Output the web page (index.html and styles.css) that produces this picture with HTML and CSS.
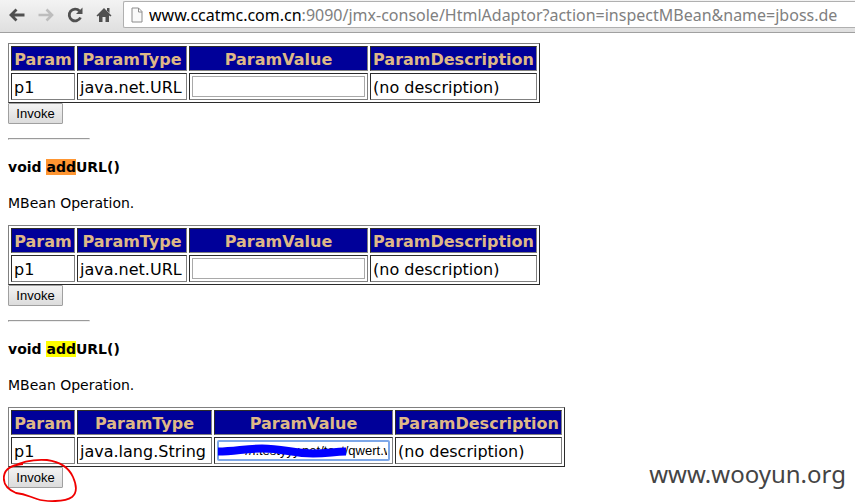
FILE: index.html
```
<!DOCTYPE html>
<html lang="en">
<head>
<meta charset="utf-8">
<title>MBean Inspector</title>
<link rel="stylesheet" href="styles.css">
</head>
<body>
<header class="toolbar">
  <nav class="nav">
    <button class="tool" aria-label="Back"><svg viewBox="0 0 18 18"><path d="M16.500 9H3M8.500 3.500L3 9l5.500 5.500" fill="none" stroke="#505050" stroke-width="2.800"/></svg></button>
    <button class="tool" aria-label="Forward"><svg viewBox="0 0 18 18"><path d="M1.500 9H15M9.500 3.500L15 9l-5.500 5.500" fill="none" stroke="#bdbdbd" stroke-width="2.600"/></svg></button>
    <button class="tool" aria-label="Reload"><svg viewBox="0 0 18 18"><path d="M13.500 5A5.900 5.900 0 1 0 14.500 11.500" fill="none" stroke="#505050" stroke-width="2.800"/><path d="M16.500 1.500V8H10z" fill="#505050"/></svg></button>
    <button class="tool" aria-label="Home"><svg viewBox="0 0 18 18"><path d="M9 2l7.500 7.500-1 1-1.500-1V16h-3.500v-5h-3v5H4V9.500l-1.500 1-1-1z" fill="#505050"/><path d="M12 2h2.500v5L12 4.500z" fill="#505050"/></svg></button>
  </nav>
  <div class="omnibox">
    <svg class="page-icon" viewBox="0 0 12 16"><path d="M1 1h6.500L11 4.500V15H1zM7.500 1v4H11" fill="#fafafa" stroke="#8c8c8c"/></svg>
    <div class="address" role="textbox" aria-label="Address" contenteditable="true" spellcheck="false"><span class="host">www.ccatmc.com.cn</span>:9090/jmx-console/HtmlAdaptor?action=inspectMBean&amp;name=jboss.de</div>
  </div>
</header>
<main>
  <form class="operation">
    <table>
      <colgroup><col class="c-param"><col class="c-url"><col class="c-value"><col class="c-desc"></colgroup>
      <tr><th>Param</th><th>ParamType</th><th>ParamValue</th><th>ParamDescription</th></tr>
      <tr><td>p1</td><td>java.net.URL</td><td class="field"><input type="text" aria-label="p1 value"></td><td>(no description)</td></tr>
    </table>
    <button class="invoke" type="button">Invoke</button>
  </form>
  <hr>
  <h4>void <mark class="current">add</mark>URL()</h4>
  <p>MBean Operation.</p>
  <form class="operation">
    <table>
      <colgroup><col class="c-param"><col class="c-url"><col class="c-value"><col class="c-desc"></colgroup>
      <tr><th>Param</th><th>ParamType</th><th>ParamValue</th><th>ParamDescription</th></tr>
      <tr><td>p1</td><td>java.net.URL</td><td class="field"><input type="text" aria-label="p1 value"></td><td>(no description)</td></tr>
    </table>
    <button class="invoke" type="button">Invoke</button>
  </form>
  <hr>
  <h4>void <mark>add</mark>URL()</h4>
  <p>MBean Operation.</p>
  <form class="operation">
    <table>
      <colgroup><col class="c-param"><col class="c-string"><col class="c-value"><col class="c-desc"></colgroup>
      <tr><th>Param</th><th>ParamType</th><th>ParamValue</th><th>ParamDescription</th></tr>
      <tr><td>p1</td><td>java.lang.String</td><td class="field"><input class="active" type="text" aria-label="p1 value" value="       //i.testyyy.net/test/qwert.war"><svg class="scribble" viewBox="0 0 130 14"><path d="M1 7.500C18 7.500 28 4.500 45 4.500C66 4.500 76 9.500 96 9.500C112 9.500 116 7.500 129 7.500" fill="none" stroke="#00f" stroke-width="8"/></svg></td><td>(no description)</td></tr>
    </table>
    <div class="circled">
      <button class="invoke" type="button">Invoke</button>
      <svg class="ring" viewBox="0 0 76 46"><path d="M8 9C20 3 31 1 44 2C58 4 66 10 70 19C74 28 74 35 69 39C62 44 43 44 34 41C25 38 22 36 13 35C3 31 0 25 1 18C2 11 8 7 20 6" fill="none" stroke="#f00000" stroke-width="1.800"/></svg>
    </div>
  </form>
</main>
<div class="watermark">www.wooyun.org</div>
</body>
</html>
```
FILE: styles.css
```
body {
  margin: 0;
  min-height: 100vh;
  overflow: hidden;
  position: relative;
  background: #fff;
  color: #000;
  font-family: "DejaVu Sans", Verdana, sans-serif;
  font-size: 14px;
}
.toolbar {
  display: flex;
  box-sizing: border-box;
  height: 33px;
  padding: 1px 0 4px 8px;
  gap: 10px;
  background: linear-gradient(#f3f3f3, #dfdfdf);
  border-bottom: 1px solid #a0a0a0;
}
.nav { display: flex; gap: 11px; align-items: center; }
.tool {
  width: 18px;
  height: 18px;
  padding: 0;
  border: 0;
  background: none;
}
.tool svg { display: block; width: 18px; height: 18px; }
.omnibox {
  display: flex;
  align-items: center;
  flex: 1;
  min-width: 0;
  gap: 6px;
  padding-left: 7px;
  border: 1px solid #b0b0b0;
  border-right: 0;
  border-radius: 2px 0 0 2px;
  background: #fff;
}
.page-icon { width: 12px; height: 16px; flex: none; }
.address {
  flex: 1;
  overflow: hidden;
  white-space: nowrap;
  outline: 0;
  color: #808080;
  font: 16px/24px "Noto Sans", sans-serif;
}
.host { color: #000; }
main { padding: 10px 8px 0; }
.operation { margin: 0; }
table {
  table-layout: fixed;
  width: 1px;
  border: 1px solid;
  border-color: #808080 #2b2b2b #2b2b2b #808080;
  border-spacing: 2px;
  font-size: 16px;
  line-height: 19px;
}
.c-param { width: 64px; }
.c-url { width: 110px; }
.c-string { width: 135px; }
.c-value { width: 179px; }
.c-desc { width: 167px; }
th, td {
  box-sizing: border-box;
  padding: 3px 2px 1px;
  border: 1px solid;
  border-color: #2b2b2b #808080 #808080 #2b2b2b;
  white-space: nowrap;
  text-align: left;
}
th { height: 25px; background: #009; color: #deb887; text-align: center; }
td { height: 27px; }
.field { position: relative; padding: 2px; }
.field input {
  display: block;
  box-sizing: border-box;
  width: 100%;
  height: 21px;
  margin: 0;
  padding: 1px 2px;
  border: 1px solid #a9a9a9;
  outline: 0;
  font: 13px "Liberation Sans", Arial, sans-serif;
}
.field .active { border: 2px solid #7da7e8; border-radius: 2px; padding: 0 1px; }
.scribble { position: absolute; left: 2px; top: 6px; width: 130px; height: 14px; }
.invoke {
  display: block;
  width: 55px;
  height: 21px;
  padding: 0;
  border: 1px solid #a0a0a0;
  border-radius: 1px;
  background: linear-gradient(#f3f3f3, #dcdcdc);
  color: #000;
  font: 13px "Liberation Sans", Arial, sans-serif;
}
hr {
  width: 80px;
  height: 0;
  margin: 14px 0 18px;
  border: 1px inset #eee;
}
h4, p { margin: 0; line-height: 18px; font-size: 14px; }
p { margin: 18px 0 13px; }
mark { background: #ff0; color: #000; }
.current { background: #ff9632; }
.circled { position: relative; }
.ring { position: absolute; left: -5px; top: -9px; width: 76px; height: 46px; }
.watermark {
  position: absolute;
  right: 9px;
  bottom: 13px;
  color: #444;
  font: 24px/34px "Noto Sans", sans-serif;
}
```
